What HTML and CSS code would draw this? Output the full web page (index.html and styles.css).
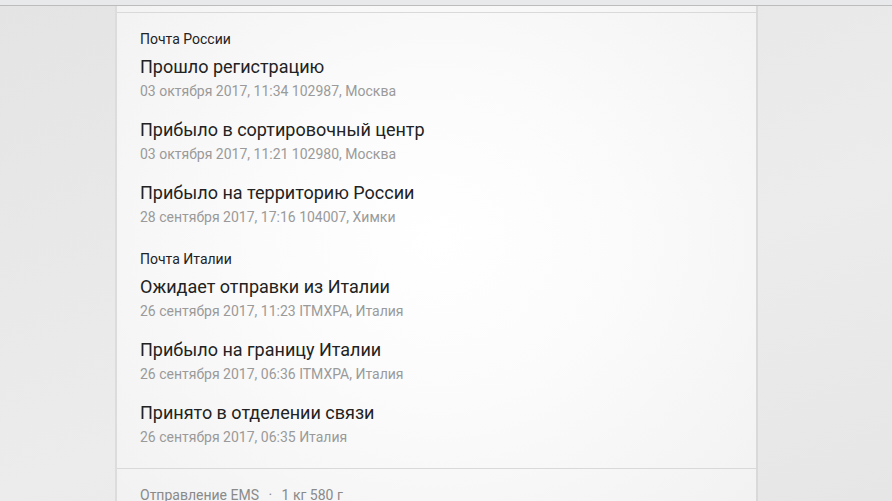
FILE: index.html
```html
<!DOCTYPE html>
<html lang="ru">
<head>
    <meta charset="UTF-8">
    <meta name="viewport" content="width=device-width, initial-scale=1.0">
    <title>Отслеживание отправления</title>
    <link rel="stylesheet" href="styles.css">
</head>
<body>
    <div class="topbar"></div>

    <div class="page">
        <div class="card">
            <div class="card-top"></div>

            <div class="history">
                <div class="group">
                    <div class="group-title">Почта России</div>
                    <div class="event">
                        <div class="event-title">Прошло регистрацию</div>
                        <div class="event-meta">03 октября 2017, 11:34 102987, Москва</div>
                    </div>
                    <div class="event">
                        <div class="event-title">Прибыло в сортировочный центр</div>
                        <div class="event-meta">03 октября 2017, 11:21 102980, Москва</div>
                    </div>
                    <div class="event">
                        <div class="event-title">Прибыло на территорию России</div>
                        <div class="event-meta">28 сентября 2017, 17:16 104007, Химки</div>
                    </div>
                </div>

                <div class="group">
                    <div class="group-title">Почта Италии</div>
                    <div class="event">
                        <div class="event-title">Ожидает отправки из Италии</div>
                        <div class="event-meta">26 сентября 2017, 11:23 ITMXPA, Италия</div>
                    </div>
                    <div class="event">
                        <div class="event-title">Прибыло на границу Италии</div>
                        <div class="event-meta">26 сентября 2017, 06:36 ITMXPA, Италия</div>
                    </div>
                    <div class="event">
                        <div class="event-title">Принято в отделении связи</div>
                        <div class="event-meta">26 сентября 2017, 06:35 Италия</div>
                    </div>
                </div>
            </div>

            <div class="card-footer">
                Отправление EMS <span class="dot">·</span> 1 кг 580 г
            </div>
        </div>
    </div>
</body>
</html>
```

FILE: styles.css
```css
* {
    margin: 0;
    padding: 0;
    box-sizing: border-box;
}

html, body {
    height: 100%;
}

body {
    font-family: Roboto, 'Noto Sans', Arial, sans-serif;
    background: linear-gradient(160deg, #e4e4e4 0%, #ececec 60%, #e6e6e6 100%);
    overflow: hidden;
}

.topbar {
    height: 6px;
    background: #e8e9eb;
    border-bottom: 1px solid #bcbcbc;
}

.page {
    display: flex;
    padding-left: 115px;
}

.card {
    width: 643px;
    min-height: 520px;
    border-left: 2px solid #dcdcdc;
    border-right: 2px solid #d9d9d9;
    background: radial-gradient(ellipse at 50% 45%, #ffffff 0%, #fbfbfb 40%, #f1f1f1 100%);
}

.card-top {
    height: 7px;
    border-bottom: 1px solid #d9d9d9;
}

.history {
    padding: 18px 23px 4px;
}

/* margins collapse with the last event's bottom margin */
.group + .group {
    margin-top: 24px;
}

.group-title {
    font-size: 14px;
    line-height: 16px;
    color: #222;
    margin-bottom: 8px;
}

.event {
    margin-bottom: 17px;
}

.event-title {
    font-size: 18px;
    line-height: 24px;
    color: #222;
}

.event-meta {
    margin-top: 2px;
    font-size: 14px;
    line-height: 20px;
    color: #9a9a9a;
}

.card-footer {
    border-top: 1px solid #d9d9d9;
    padding: 17px 23px;
    font-size: 14px;
    line-height: 18px;
    color: #8a8a8a;
}

.dot {
    margin: 0 6px;
}
```
